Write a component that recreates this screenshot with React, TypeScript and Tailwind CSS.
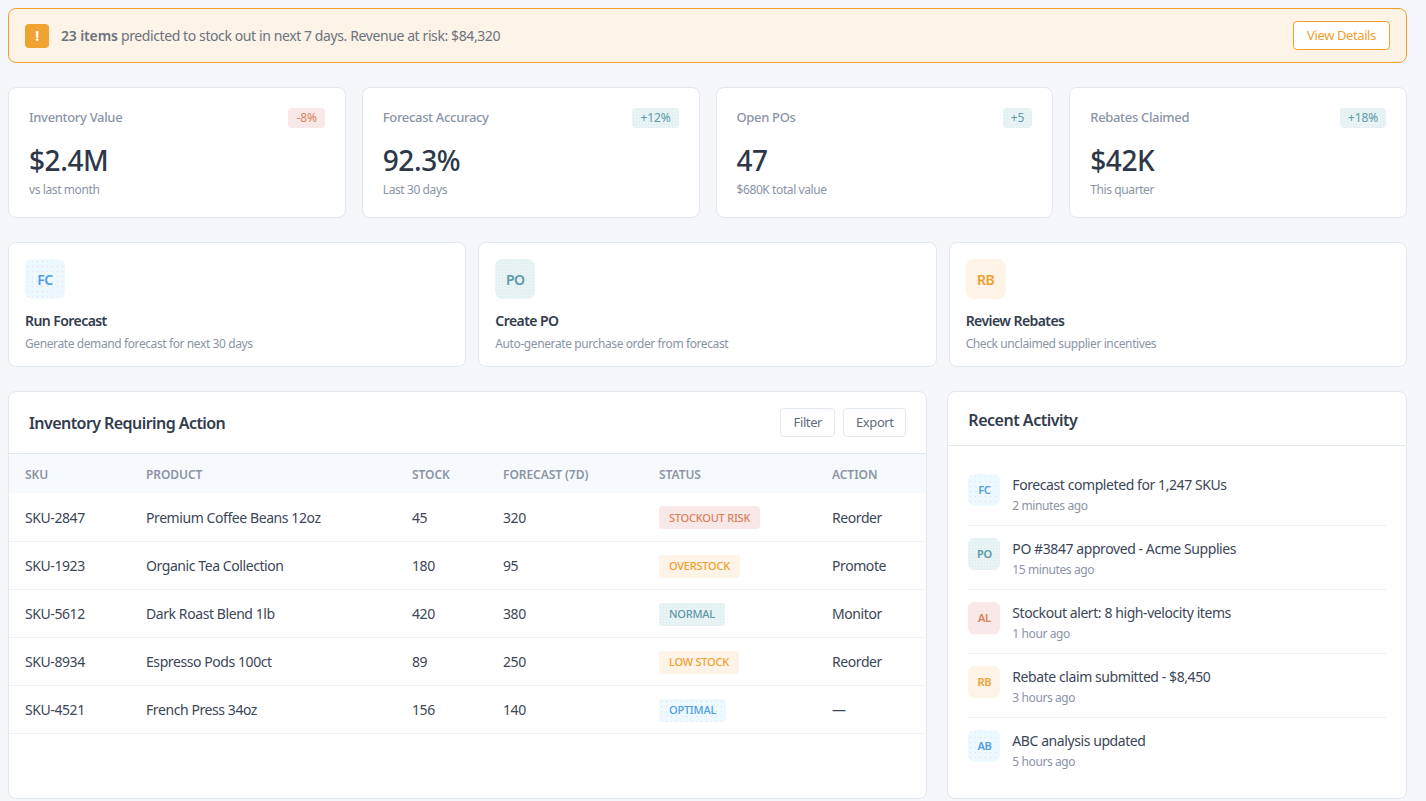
const dotsBlue = "bg-[#ecf9fe] bg-[radial-gradient(#f6d3ec_0.55px,transparent_0.7px)] bg-[length:5px_5px]";
const dotsTeal = "bg-[#e8f3f6] bg-[radial-gradient(#dcebe8_0.6px,transparent_0.8px)] bg-[length:3px_3px]";

const stats = [
  { label: "Inventory Value", badge: "-8%", value: "$2.4M", sub: "vs last month", badgeClass: "bg-[#f8e8e8] text-[#d9825b]" },
  { label: "Forecast Accuracy", badge: "+12%", value: "92.3%", sub: "Last 30 days", badgeClass: `${dotsTeal} text-[#5f9aa8]` },
  { label: "Open POs", badge: "+5", value: "47", sub: "$680K total value", badgeClass: `${dotsTeal} text-[#5f9aa8]` },
  { label: "Rebates Claimed", badge: "+18%", value: "$42K", sub: "This quarter", badgeClass: `${dotsTeal} text-[#5f9aa8]` },
];

const actions = [
  { code: "FC", title: "Run Forecast", sub: "Generate demand forecast for next 30 days", iconClass: `${dotsBlue} text-[#4f9de8]` },
  { code: "PO", title: "Create PO", sub: "Auto-generate purchase order from forecast", iconClass: `${dotsTeal} text-[#5b9aa6]` },
  { code: "RB", title: "Review Rebates", sub: "Check unclaimed supplier incentives", iconClass: "bg-[#fdf3e6] text-[#f0a030]" },
];

const rows = [
  { sku: "SKU-2847", product: "Premium Coffee Beans 12oz", stock: "45", forecast: "320", status: "STOCKOUT RISK", action: "Reorder", statusClass: "bg-[#f8e8e8] text-[#d9825b]" },
  { sku: "SKU-1923", product: "Organic Tea Collection", stock: "180", forecast: "95", status: "OVERSTOCK", action: "Promote", statusClass: "bg-[#fdf3e6] text-[#f0a030]" },
  { sku: "SKU-5612", product: "Dark Roast Blend 1lb", stock: "420", forecast: "380", status: "NORMAL", action: "Monitor", statusClass: `${dotsTeal} text-[#5f9aa8]` },
  { sku: "SKU-8934", product: "Espresso Pods 100ct", stock: "89", forecast: "250", status: "LOW STOCK", action: "Reorder", statusClass: "bg-[#fdf3e6] text-[#f0a030]" },
  { sku: "SKU-4521", product: "French Press 34oz", stock: "156", forecast: "140", status: "OPTIMAL", action: "—", statusClass: `${dotsBlue} text-[#4f9de8]` },
];

const activity = [
  { code: "FC", text: "Forecast completed for 1,247 SKUs", time: "2 minutes ago", iconClass: `${dotsBlue} text-[#4f9de8]` },
  { code: "PO", text: "PO #3847 approved - Acme Supplies", time: "15 minutes ago", iconClass: `${dotsTeal} text-[#5b9aa6]` },
  { code: "AL", text: "Stockout alert: 8 high-velocity items", time: "1 hour ago", iconClass: "bg-[#f8e8e8] text-[#d9825b]" },
  { code: "RB", text: "Rebate claim submitted - $8,450", time: "3 hours ago", iconClass: "bg-[#fdf3e6] text-[#f0a030]" },
  { code: "AB", text: "ABC analysis updated", time: "5 hours ago", iconClass: `${dotsBlue} text-[#4f9de8]` },
];

const headers = ["SKU", "PRODUCT", "STOCK", "FORECAST (7D)", "STATUS", "ACTION"];

export default function App() {
  return (
    <div className="h-[801px] overflow-hidden bg-[#f5f7fa] pt-2 pl-2 pr-[19px] font-['Noto_Sans','Open_Sans',sans-serif] tracking-[-0.025em] text-[#2d3748]">
      {/* Alert banner */}
      <div className="flex h-[55px] items-center justify-between rounded-lg border border-[#f0a030] bg-[#fdf3e6] px-4">
        <div className="flex items-center gap-3">
          <div className="flex h-6 w-6 items-center justify-center rounded bg-[#eea333] text-sm font-bold text-white">!</div>
          <p className="text-sm text-[#6b7280]">
            <strong className="font-semibold tracking-[-0.01em]">23 items</strong> predicted to stock out in next 7 days. Revenue at risk: $84,320
          </p>
        </div>
        <button className="h-[29px] w-[97px] rounded border border-[#f0a030] bg-white text-[13px] text-[#f0a030]">View Details</button>
      </div>

      {/* Stat cards */}
      <div className="mt-6 grid grid-cols-4 gap-4">
        {stats.map((s) => (
          <div key={s.label} className="h-[131px] rounded-lg border border-[#e2e8f0] bg-white px-5 pt-5">
            <div className="flex items-start justify-between">
              <span className="text-[13px] leading-[18px] font-medium tracking-[-0.025em] text-[#8a94a6]">{s.label}</span>
              <span className={`flex h-5 items-center rounded px-2 text-xs tracking-[-0.01em] ${s.badgeClass}`}>{s.badge}</span>
            </div>
            <div className="mt-[11px] text-[28px] leading-[42px] font-medium tracking-[-0.015em] text-[#2d3748]">{s.value}</div>
            <div className="text-xs leading-[18px] text-[#8a94a6]">{s.sub}</div>
          </div>
        ))}
      </div>

      {/* Quick actions */}
      <div className="mt-6 grid grid-cols-3 gap-3">
        {actions.map((a) => (
          <div key={a.code} className="h-[125px] rounded-lg border border-[#e2e8f0] bg-white p-4">
            <div className={`flex h-10 w-10 items-center justify-center rounded-lg pt-px text-sm font-semibold ${a.iconClass}`}>{a.code}</div>
            <div className="mt-[11px] text-sm leading-[21px] font-semibold tracking-[-0.04em] text-[#323c4e]">{a.title}</div>
            <div className="mt-1 text-xs leading-[18px] text-[#8a94a6]">{a.sub}</div>
          </div>
        ))}
      </div>

      {/* Table + activity */}
      <div className="mt-6 grid h-[407px] grid-cols-[2fr_1fr] gap-5">
        <div className="rounded-lg border border-[#e2e8f0] bg-white">
          <div className="flex h-[62px] items-center justify-between border-b border-[#e2e8f0] px-5">
            <h2 className="pt-px text-base font-semibold tracking-[-0.035em] text-[#323c4e]">Inventory Requiring Action</h2>
            <div className="flex gap-2">
              <button className="h-[29px] w-[55px] rounded border border-[#e2e8f0] bg-white text-[13px] text-[#5f6b7c]">Filter</button>
              <button className="h-[29px] w-[63px] rounded border border-[#e2e8f0] bg-white text-[13px] text-[#5f6b7c]">Export</button>
            </div>
          </div>
          <table className="w-full table-fixed border-collapse text-left">
            <colgroup>
              <col className="w-[121px]" />
              <col className="w-[266px]" />
              <col className="w-[91px]" />
              <col className="w-[156px]" />
              <col className="w-[173px]" />
              <col />
            </colgroup>
            <thead>
              <tr className="h-[39px] bg-[#f7fafc]">
                {headers.map((h) => (
                  <th key={h} className="px-4 pt-0.5 text-xs font-semibold tracking-[-0.005em] text-[#8a94a6]">{h}</th>
                ))}
              </tr>
            </thead>
            <tbody>
              {rows.map((r) => (
                <tr key={r.sku} className="h-12 border-b border-[#edf2f7] text-sm tracking-[-0.03em] text-[#3c4657]">
                  <td className="px-4 pt-0.5">{r.sku}</td>
                  <td className="px-4 pt-0.5">{r.product}</td>
                  <td className="px-4 pt-0.5">{r.stock}</td>
                  <td className="px-4 pt-0.5">{r.forecast}</td>
                  <td className="px-4 pt-0.5">
                    <span className={`inline-flex h-[23px] items-center rounded px-2.5 text-[11px] font-medium tracking-[-0.02em] ${r.statusClass}`}>{r.status}</span>
                  </td>
                  <td className="px-4 pt-0.5">{r.action}</td>
                </tr>
              ))}
            </tbody>
          </table>
        </div>

        <div className="rounded-lg border border-[#e2e8f0] bg-white">
          <div className="flex h-[54px] items-center border-b border-[#e2e8f0] px-5 pt-0.5">
            <h2 className="text-base font-semibold tracking-[-0.03em] text-[#323c4e]">Recent Activity</h2>
          </div>
          <div className="px-5 py-4">
            {activity.map((item, i) => (
              <div key={item.code} className={`flex h-16 gap-3 pt-3 ${i < 4 ? "border-b border-[#edf2f7]" : ""}`}>
                <div className={`flex h-8 w-8 shrink-0 items-center justify-center rounded-md text-[11px] font-semibold ${item.iconClass}`}>{item.code}</div>
                <div className="pt-px">
                  <div className="text-sm leading-5 tracking-[-0.03em] text-[#3c4657]">{item.text}</div>
                  <div className="mt-0.5 text-xs leading-[18px] text-[#8a94a6]">{item.time}</div>
                </div>
              </div>
            ))}
          </div>
        </div>
      </div>
    </div>
  );
}
